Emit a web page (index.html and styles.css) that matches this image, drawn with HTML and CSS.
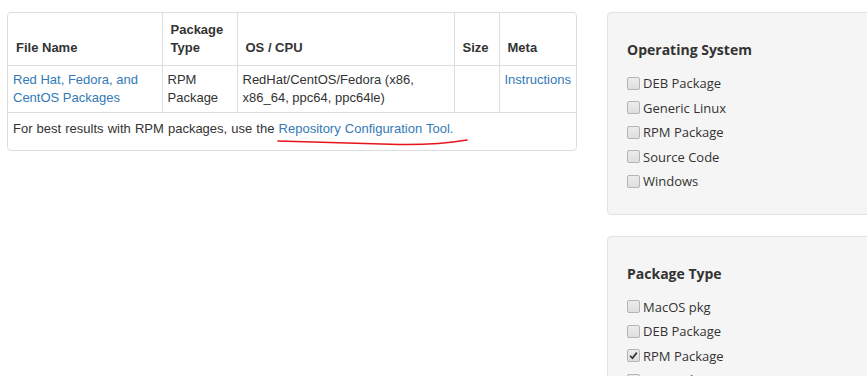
FILE: index.html
```html
<!DOCTYPE html>
<html lang="en">

<head>
    <meta charset="UTF-8">
    <title>Downloads</title>
    <link rel="stylesheet" href="styles.css">
</head>

<body>
    <div class="page">
        <div class="main">
            <div class="table-box">
                <table class="downloads">
                    <colgroup>
                        <col class="col-name">
                        <col class="col-type">
                        <col class="col-os">
                        <col class="col-size">
                        <col class="col-meta">
                    </colgroup>
                    <thead>
                        <tr>
                            <th>File Name</th>
                            <th>Package<br>Type</th>
                            <th>OS / CPU</th>
                            <th>Size</th>
                            <th>Meta</th>
                        </tr>
                    </thead>
                    <tbody>
                        <tr>
                            <td><a href="#">Red Hat, Fedora, and<br>CentOS Packages</a></td>
                            <td>RPM<br>Package</td>
                            <td>RedHat/CentOS/Fedora (x86,<br>x86_64, ppc64, ppc64le)</td>
                            <td></td>
                            <td><a href="#">Instructions</a></td>
                        </tr>
                        <tr class="note-row">
                            <td colspan="5">For best results with RPM packages, use the <a href="#">Repository Configuration Tool.</a></td>
                        </tr>
                    </tbody>
                </table>
                <!-- hand drawn mark under the link -->
                <svg class="scribble" width="200" height="12" viewBox="0 0 200 12">
                    <path d="M1 5 C 40 6, 80 7, 122 8.5 C 155 9, 178 6, 190 4" fill="none" stroke="#e8141a" stroke-width="1.6" stroke-linecap="round"/>
                </svg>
            </div>
        </div>

        <div class="sidebar">
            <div class="filter-box">
                <h3>Operating System</h3>
                <ul class="filter-list">
                    <li><span class="check"></span>DEB Package</li>
                    <li><span class="check"></span>Generic Linux</li>
                    <li><span class="check"></span>RPM Package</li>
                    <li><span class="check"></span>Source Code</li>
                    <li><span class="check"></span>Windows</li>
                </ul>
            </div>

            <div class="filter-box">
                <h3>Package Type</h3>
                <ul class="filter-list">
                    <li><span class="check"></span>MacOS pkg</li>
                    <li><span class="check"></span>DEB Package</li>
                    <li><span class="check checked"><svg width="9" height="9" viewBox="0 0 9 9"><path d="M1.2 4.8 L3.4 7.2 L7.8 1.6" fill="none" stroke="#333" stroke-width="1.7"/></svg></span>RPM Package</li>
                    <li><span class="check"></span>MSI Package</li>
                </ul>
            </div>
        </div>
    </div>
</body>

</html>
```

FILE: styles.css
```css
/* page layout */
html, body {
    margin: 0;
    overflow: hidden;
    background: #fff;
}

body {
    font-family: "Liberation Sans", Arial, sans-serif;
    font-size: 13px;
    color: #333;
}

a {
    color: #337ab7;
    text-decoration: none;
}

.page {
    display: flex;
    align-items: flex-start;
    gap: 30px;
    padding: 12px 0 0 7px;
    width: 1000px;
}

.main {
    width: 570px;
    flex: none;
}

/* downloads table */
.table-box {
    position: relative;
    border: 1px solid #ddd;
    border-radius: 4px;
    overflow: hidden;
}

.downloads {
    width: 100%;
    table-layout: fixed;
    border-collapse: collapse;
    line-height: 18px;
}

.col-name { width: 154px; }
.col-type { width: 75px; }
.col-os { width: 217px; }
.col-size { width: 45px; }

.downloads th,
.downloads td {
    text-align: left;
    border-left: 1px solid #ddd;
    border-bottom: 1px solid #ddd;
}

.downloads th:first-child,
.downloads td:first-child {
    border-left: none;
}

.downloads th {
    font-weight: bold;
    vertical-align: bottom;
    padding: 8px 4px 8px 8px;
}

.downloads td {
    vertical-align: top;
    padding: 5px 4px 5px 5px;
}

.downloads tr.note-row td {
    border-bottom: none;
    padding: 7px 5px 12px;
    word-spacing: 0.5px;
}

.scribble {
    position: absolute;
    left: 269px;
    top: 123px;
}

/* sidebar filters */
.sidebar {
    width: 300px;
    flex: none;
    display: flex;
    flex-direction: column;
    gap: 21px;
}

.filter-box {
    background: #f5f5f5;
    border: 1px solid #e3e3e3;
    border-radius: 4px;
    padding: 27px 19px 20px;
    font-family: "Open Sans", "Noto Sans", sans-serif;
}

.filter-box h3 {
    margin: 0 0 11px;
    font-size: 14px;
    line-height: 20px;
    font-weight: bold;
    color: #333;
}

.filter-list {
    list-style: none;
    margin: 0;
    padding: 0;
}

.filter-list li {
    display: flex;
    align-items: center;
    height: 24.5px;
    font-size: 13px;
    color: #333;
}

.check {
    width: 11px;
    height: 11px;
    border: 1px solid #b4b4b4;
    border-radius: 2px;
    background: linear-gradient(#ececec, #dedede);
    margin-right: 3px;
    display: flex;
    align-items: center;
    justify-content: center;
}
```
